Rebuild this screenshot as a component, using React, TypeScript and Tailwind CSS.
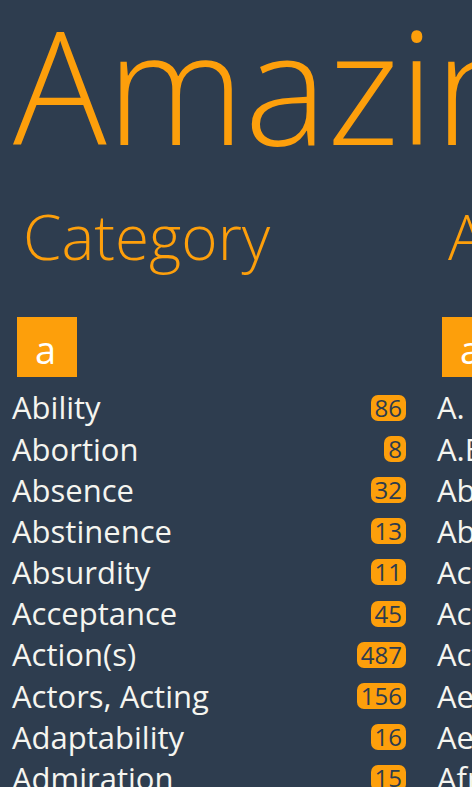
import React from 'react';

type Item = { name: string; count?: number };

const categories: Item[] = [
  { name: 'Ability', count: 86 },
  { name: 'Abortion', count: 8 },
  { name: 'Absence', count: 32 },
  { name: 'Abstinence', count: 13 },
  { name: 'Absurdity', count: 11 },
  { name: 'Acceptance', count: 45 },
  { name: 'Action(s)', count: 487 },
  { name: 'Actors, Acting', count: 156 },
  { name: 'Adaptability', count: 16 },
  { name: 'Admiration', count: 15 },
];

const authors: Item[] = [
  { name: 'A. A. Milne', count: 12 },
  { name: 'A.E. Housman', count: 4 },
  { name: 'Abigail Adams', count: 9 },
  { name: 'Abraham Lincoln', count: 71 },
  { name: 'Ace Frehley', count: 2 },
  { name: 'Ackerman', count: 3 },
  { name: 'Actius', count: 1 },
  { name: 'Aeschylus', count: 28 },
  { name: 'Aesop', count: 40 },
  { name: 'African Proverb', count: 33 },
];

const Column = ({ title, items }: { title: string; items: Item[] }) => (
  <div className="w-[425px] shrink-0">
    <h2 className="pl-[23px] h-[144px] text-[62px] font-light leading-[126px] text-[#fd9f0b] whitespace-nowrap">
      {title}
    </h2>
    <div className="ml-[17px] w-[60px] h-[60px] overflow-hidden bg-[#fd9f0b] text-white text-[38px] leading-[64px] pl-[18px]">
      a
    </div>
    <ul className="mt-[10px] ml-[12px] w-[394px]">
      {items.map((item) => (
        <li key={item.name} className="flex items-center justify-between h-[41.2px] text-[31px] text-[#f5f5f0] whitespace-nowrap">
          <span>{item.name}</span>
          {item.count !== undefined && (
            <span className="rounded-[7px] bg-[#fd9f0b] text-[#2d3c4e] text-[24px] leading-[26px] px-[4px]">
              {item.count}
            </span>
          )}
        </li>
      ))}
    </ul>
  </div>
);

export default function App() {
  return (
    <div
      className="w-[472px] h-[787px] overflow-hidden bg-[#2e3d4f]"
      style={{ fontFamily: '"Open Sans", "Noto Sans", sans-serif' }}
    >
      <h1 className="pl-[13px] h-[173px] text-[156px] font-light leading-[170px] text-[#fd9f0b] whitespace-nowrap">
        Amazing Quotes
      </h1>
      <div className="flex">
        <Column title="Category" items={categories} />
        <Column title="Author" items={authors} />
      </div>
    </div>
  );
}
